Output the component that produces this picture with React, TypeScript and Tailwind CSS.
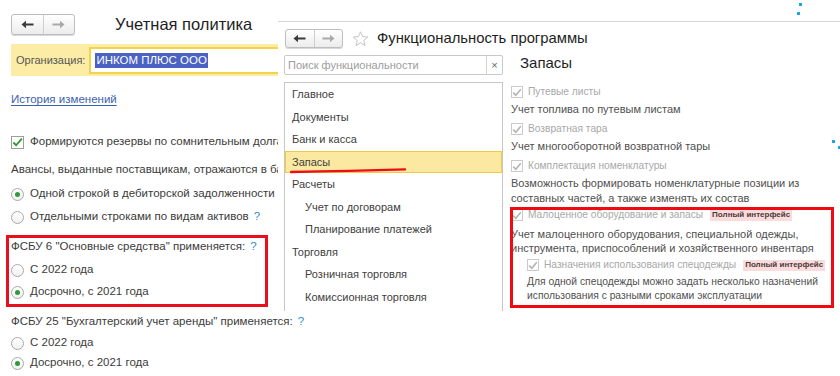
import React from 'react'

function NavButtons({ small }: { small?: boolean }) {
  const box = small ? 'w-[58px] h-[19px]' : 'w-[64px] h-[21px]'
  return (
    <div
      className={`${box} flex rounded-[3px] border border-[#bdbdbd] bg-gradient-to-b from-white to-[#ececec] shadow-[0_1px_0_#d8d8d8]`}
    >
      <div className="flex-1 flex items-center justify-center border-r border-[#cfcfcf]">
        <svg width="13" height="9" viewBox="0 0 13 9">
          <path d="M0.5 4.5 L5 0.8 L5 3.4 L12.5 3.4 L12.5 5.6 L5 5.6 L5 8.2 Z" fill="#3a3a3a" />
        </svg>
      </div>
      <div className="flex-1 flex items-center justify-center">
        <svg width="13" height="9" viewBox="0 0 13 9">
          <path d="M12.5 4.5 L8 0.8 L8 3.6 L0.5 3.6 L0.5 5.4 L8 5.4 L8 8.2 Z" fill="#a9a9a9" />
        </svg>
      </div>
    </div>
  )
}

function Radio({ checked }: { checked?: boolean }) {
  return (
    <span className="w-[13px] h-[13px] rounded-full border border-[#a9a9a9] bg-gradient-to-b from-white to-[#f1f1f1] flex items-center justify-center shrink-0">
      {checked && <span className="w-[5px] h-[5px] rounded-full bg-[#2f9a3a]" />}
    </span>
  )
}

function Question() {
  return <span className="ml-[5px] text-[#2a8ad0]">?</span>
}

function RadioRow({ label, checked, mt }: { label: React.ReactNode; checked?: boolean; mt: string }) {
  return (
    <div className={`${mt} h-[14px] flex items-center gap-[6px] whitespace-nowrap`}>
      <Radio checked={checked} />
      <span>{label}</span>
    </div>
  )
}

function DimCheck({ label, badge, indent }: { label: string; badge?: boolean; indent?: boolean }) {
  return (
    <div className={`flex items-center gap-[5px] h-full ${indent ? 'pl-[16px]' : ''}`}>
      <span className="w-[12px] h-[12px] border border-[#cbcbcb] bg-white flex items-center justify-center shrink-0">
        <svg width="10" height="9" viewBox="0 0 10 9">
          <path d="M1.2 4.6 L3.8 7.2 L8.8 1.2" stroke="#b4b4b4" strokeWidth="1.6" fill="none" />
        </svg>
      </span>
      <span className="text-[#a8a8a8] text-[10.2px]">{label}</span>
      {badge && (
        <span className="ml-[2px] h-[11px] px-[2px] flex items-center bg-[#fbdcdc] text-[#4a3a3a] text-[8px] font-bold leading-none">
          Полный интерфейс
        </span>
      )}
    </div>
  )
}

const listItems = [
  { label: 'Главное' },
  { label: 'Документы' },
  { label: 'Банк и касса' },
  { label: 'Запасы', active: true },
  { label: 'Расчеты' },
  { label: 'Учет по договорам', sub: true },
  { label: 'Планирование платежей', sub: true },
  { label: 'Торговля' },
  { label: 'Розничная торговля', sub: true },
  { label: 'Комиссионная торговля', sub: true },
  { label: 'Производство' },
]

export default function App() {
  return (
    <div className="relative w-[840px] h-[376px] overflow-hidden bg-white font-['Liberation_Sans',Arial,sans-serif] text-[11.5px] text-[#3b3b3b]">
      {/* Учетная политика */}
      <div className="pt-[14px] pl-[11px]">
        <div className="h-[21px] flex items-center">
          <NavButtons />
          <span className="ml-[40px] text-[16.5px] text-[#1e1e1e] leading-none">Учетная политика</span>
        </div>

        <div className="mt-[9px] h-[32px] w-[600px] bg-[#fbeda5] flex items-center pl-[5px]">
          <span className="text-[#555] text-[11px]">Организация:</span>
          <div className="ml-[4px] h-[27px] flex-1 border-2 border-[#f4d24a] bg-white flex items-center pl-[4px]">
            <span className="bg-[#4a62c2] text-white text-[11.5px] leading-[15px] px-[1px]">ИНКОМ ПЛЮС ООО</span>
          </div>
        </div>

        <div className="mt-[17px] h-[14px] flex items-center">
          <span className="text-[#3c63b0] underline underline-offset-2">История изменений</span>
        </div>

        <div className="mt-[28px] h-[14px] flex items-center gap-[6px] whitespace-nowrap">
          <span className="w-[13px] h-[13px] border border-[#9d9d9d] bg-white flex items-center justify-center shrink-0">
            <svg width="12" height="11" viewBox="0 0 12 11">
              <path d="M1.5 5.5 L4.5 8.5 L10.8 1.2" stroke="#2e9b2a" strokeWidth="2" fill="none" />
            </svg>
          </span>
          <span>Формируются резервы по сомнительным долгам</span>
        </div>

        <div className="mt-[14px] h-[14px] flex items-center whitespace-nowrap">
          Авансы, выданные поставщикам, отражаются в балансе:
        </div>
        <RadioRow mt="mt-[10px]" checked label="Одной строкой в дебиторской задолженности" />
        <RadioRow
          mt="mt-[9px]"
          label={
            <>
              Отдельными строками по видам активов
              <Question />
            </>
          }
        />

        <div className="mt-[16px] h-[14px] flex items-center whitespace-nowrap">
          ФСБУ 6 "Основные средства" применяется:
          <Question />
        </div>
        <RadioRow mt="mt-[9px]" label="С 2022 года" />
        <RadioRow mt="mt-[8px]" checked label="Досрочно, с 2021 года" />

        <div className="mt-[16px] h-[14px] flex items-center whitespace-nowrap">
          ФСБУ 25 "Бухгалтерский учет аренды" применяется:
          <Question />
        </div>
        <RadioRow mt="mt-[7px]" label="С 2022 года" />
        <RadioRow mt="mt-[6px]" checked label="Досрочно, с 2021 года" />
      </div>

      {/* annotation on the left form */}
      <div className="absolute left-[6px] top-[235px] w-[262px] h-[72px] border-[3px] border-[#e8101e]" />

      {/* Функциональность программы */}
      <div className="absolute left-[278px] top-[21px] w-[562px] h-[290px] bg-white border-t border-[#d6d6d6] overflow-hidden text-[11px]">
        <div className="pl-[7px] pt-[7px] h-[26px] flex items-center">
          <NavButtons small />
          <svg className="ml-[9px]" width="17" height="16" viewBox="0 0 17 16">
            <path
              d="M8.5 0.8 L10.6 5.6 L15.8 6 L11.8 9.4 L13 14.6 L8.5 11.8 L4 14.6 L5.2 9.4 L1.2 6 L6.4 5.6 Z"
              fill="none"
              stroke="#c4c4c4"
              strokeWidth="1"
            />
          </svg>
          <span className="ml-[8px] text-[14.8px] text-[#1e1e1e] leading-none">Функциональность программы</span>
        </div>

        <div className="flex mt-[7px]">
          <div className="ml-[6px] w-[219px] shrink-0">
            <div className="h-[20px] flex border border-[#c9c9c9] rounded-[2px] bg-white">
              <span className="flex-1 pl-[3px] flex items-center text-[#9d9d9d] text-[11px]">Поиск функциональности</span>
              <span className="w-[16px] border-l border-[#d4d4d4] flex items-center justify-center text-[#666] text-[11px]">
                ×
              </span>
            </div>
            <div className="relative mt-[7px] h-[260px] border border-[#c6c6c6] bg-white">
              {listItems.map((it) => (
                <div
                  key={it.label}
                  className={`h-[22.5px] flex items-center ${it.sub ? 'pl-[19px]' : 'pl-[6px]'} ${
                    it.active ? 'bg-[#fbe9a1] border border-[#f0cb47]' : 'border border-transparent'
                  } text-[#404040]`}
                >
                  {it.label}
                </div>
              ))}
              <svg className="absolute left-[5px] top-[84px]" width="116" height="7" viewBox="0 0 116 7">
                <path d="M1 5 Q 60 4 115 2.4" stroke="#ef0d12" strokeWidth="2.4" fill="none" strokeLinecap="round" />
              </svg>
            </div>
          </div>

          <div className="pl-[8px] flex-1 whitespace-nowrap">
            <div className="h-[20px] -mt-[2px] pl-[9px] flex items-center text-[15px] text-[#1e1e1e]">Запасы</div>
            <div className="mt-[9px] h-[20px]">
              <DimCheck label="Путевые листы" />
            </div>
            <div className="leading-[15px] text-[#505050]">Учет топлива по путевым листам</div>
            <div className="mt-[2px] h-[20px]">
              <DimCheck label="Возвратная тара" />
            </div>
            <div className="leading-[15px] text-[#505050]">Учет многооборотной возвратной тары</div>
            <div className="mt-[2px] h-[20px]">
              <DimCheck label="Комплектация номенклатуры" />
            </div>
            <div className="leading-[15px] text-[#505050]">
              Возможность формировать номенклатурные позиции из
              <br />
              составных частей, а также изменять их состав
            </div>
            <div className="h-[18px]">
              <DimCheck label="Малоценное оборудование и запасы" badge />
            </div>
            <div className="mt-[3px] leading-[14px] text-[#505050]">
              Учет малоценного оборудования, специальной одежды,
              <br />
              инструмента, приспособлений и хозяйственного инвентаря
            </div>
            <div className="h-[20px]">
              <DimCheck label="Назначения использования спецодежды" badge indent />
            </div>
            <div className="pl-[16px] leading-[14px] text-[10.3px] text-[#505050]">
              Для одной спецодежды можно задать несколько назначений
              <br />
              использования с разными сроками эксплуатации
            </div>
          </div>
        </div>

        {/* annotation on the right panel */}
        <div className="absolute left-[232px] top-[185px] w-[324px] h-[101px] border-[3px] border-[#f00a10]" />
      </div>

      {/* stray blue dots */}
      <span className="absolute left-[799px] top-[3px] w-[3px] h-[3px] bg-[#1aa3ea]" />
      <span className="absolute left-[797px] top-[12px] w-[3px] h-[3px] bg-[#1aa3ea]" />
      <span className="absolute left-[832px] top-[140px] w-[3px] h-[3px] bg-[#1aa3ea]" />
      <span className="absolute left-[838px] top-[146px] w-[2px] h-[3px] bg-[#1aa3ea]" />
    </div>
  )
}
